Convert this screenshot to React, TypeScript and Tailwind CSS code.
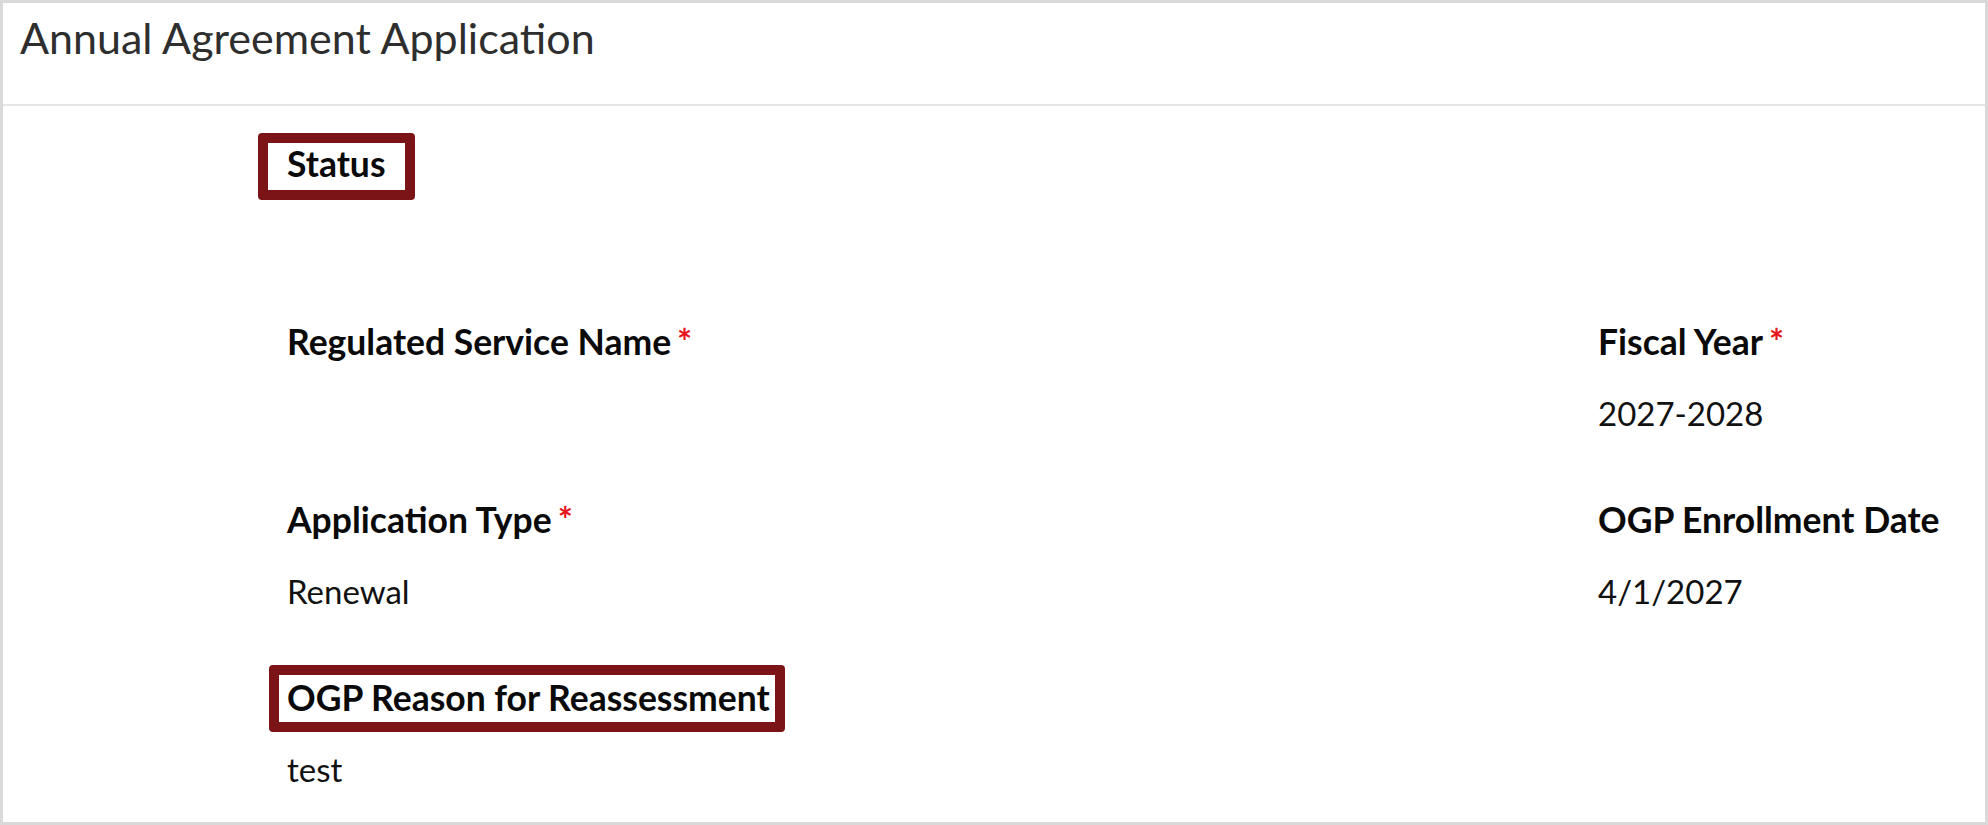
import React from 'react';

type Field = {
  label: string;
  value?: string;
  required?: boolean;
  marked?: 'status' | 'reason';
};

const rows: [Field, Field | null][] = [
  [{ label: 'Status', marked: 'status' }, null],
  [
    { label: 'Regulated Service Name', required: true },
    { label: 'Fiscal Year', required: true, value: '2027-2028' },
  ],
  [
    { label: 'Application Type', required: true, value: 'Renewal' },
    { label: 'OGP Enrollment Date', value: '4/1/2027' },
  ],
  [{ label: 'OGP Reason for Reassessment', value: 'test', marked: 'reason' }, null],
];

export default function App() {
  return (
    <div
      className="w-[1988px] h-[825px] bg-white border-[3px] border-[#d9d9d9] flex flex-col overflow-hidden"
      style={{ fontFamily: 'Lato, "Noto Sans", sans-serif' }}
    >
      {/* Header */}
      <div className="h-[103px] shrink-0 border-b-2 border-[#e6e6e6] pl-[17px] pt-[10px]">
        <h1 className="text-[43px] leading-[50px] text-[#2e2e2e] font-normal">
          Annual Agreement Application
        </h1>
      </div>

      {/* Body */}
      <div className="flex-1 pl-[284px] pt-[37px]">
        <div className="grid grid-cols-[1311px_1fr]">
          {rows.map(([left, right], i) => (
            <React.Fragment key={i}>
              <FieldBlock field={left} />
              {right ? <FieldBlock field={right} /> : <div />}
            </React.Fragment>
          ))}
        </div>
      </div>
    </div>
  );
}

function FieldBlock({ field }: { field: Field }) {
  return (
    <div className="h-[178px]">
      <div className="text-[35.5px] leading-[42px] font-bold text-[#0a0a0a] whitespace-nowrap">
        <span className="relative">
          {field.label}
          {/* highlight annotations drawn over the label */}
          {field.marked === 'status' && (
            <span className="absolute -left-[29px] -right-[29px] -top-[9px] -bottom-[15px] border-[10px] border-[#7a1417] rounded-[4px] pointer-events-none" />
          )}
          {field.marked === 'reason' && (
            <span className="absolute -left-[18px] -right-[15px] -top-[11px] -bottom-[13px] border-[10px] border-[#7a1417] rounded-[4px] pointer-events-none" />
          )}
        </span>
        {field.required && <span className="ml-[6px] text-[#e8141c]">*</span>}
      </div>
      <div className="mt-[30px] min-h-[40px] text-[33px] leading-[40px] text-[#111111]">
        {field.value}
      </div>
    </div>
  );
}
